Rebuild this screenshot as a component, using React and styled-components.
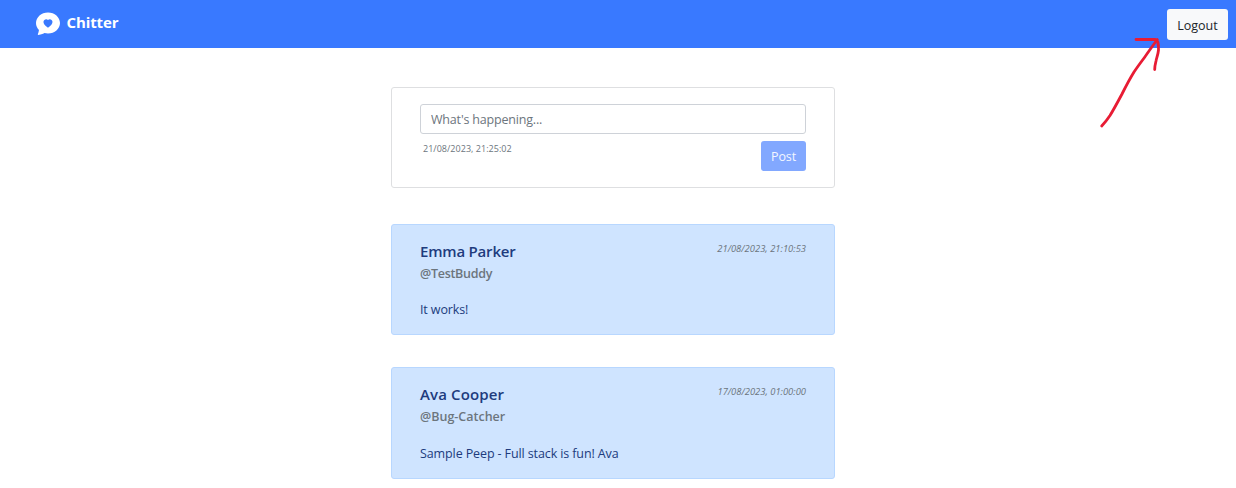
import React from "react";
import styled, { createGlobalStyle } from "styled-components";
import { BsChatHeartFill } from "react-icons/bs";

const GlobalStyle = createGlobalStyle`
  *, *::before, *::after { box-sizing: border-box; }
  body {
    margin: 0;
    background: #fff;
    color: #212529;
    font-family: "Segoe UI", "Open Sans", "Noto Sans", sans-serif;
    font-size: 12.5px;
    line-height: 18px;
    overflow: hidden;
  }
`;

const Page = styled.div`
  position: relative;
  height: 488px;
  overflow: hidden;
`;

const Navbar = styled.nav`
  display: flex;
  align-items: center;
  justify-content: space-between;
  height: 48px;
  padding: 0 8px 0 36px;
  background: #3979ff;
`;

const Brand = styled.a`
  display: flex;
  align-items: center;
  gap: 6.5px;
  color: #fff;
  font-size: 15px;
  font-weight: 700;
  line-height: 24px;
  letter-spacing: -0.1px;

  svg {
    display: block;
    margin-top: -2px;
  }
  span {
    margin-top: -4px;
  }
`;

const Button = styled.button`
  display: flex;
  align-items: center;
  justify-content: center;
  width: ${(p) => p.$width}px;
  height: ${(p) => p.$height}px;
  padding: ${(p) => (p.$primary ? 1 : 3)}px 0 0;
  border: 0;
  border-radius: 3px;
  font: inherit;
  letter-spacing: ${(p) => p.$tracking || 0}px;
  color: ${(p) => (p.$primary ? "#f3f7ff" : "#212529")};
  background: ${(p) => (p.$primary ? "#82a8ff" : "#f8f9fa")};
`;

const Feed = styled.main`
  display: flex;
  flex-direction: column;
  width: 444px;
  margin: 39px 0 0 391px;
`;

const Card = styled.section`
  height: ${(p) => p.$height}px;
  margin-bottom: ${(p) => p.$gap || 0}px;
  padding: 16px 28px;
  border: 1px solid ${(p) => (p.$tinted ? "#b8d7ff" : "#dedfe1")};
  border-radius: 3px;
  background: ${(p) => (p.$tinted ? "#cfe4ff" : "#fff")};
`;

const PostInput = styled.input`
  display: block;
  width: 100%;
  height: 30px;
  padding: 1px 9px 0 10px;
  border: 1px solid #ced2d8;
  border-radius: 3px;
  outline: 0;
  font: inherit;
  letter-spacing: -0.18px;

  &::placeholder {
    color: #6c757d;
    opacity: 1;
  }
`;

const Row = styled.div`
  display: flex;
  align-items: flex-start;
  justify-content: space-between;
  margin-top: ${(p) => p.$top || 0}px;
`;

const Stamp = styled.time`
  margin: ${(p) => p.$margin || 0};
  color: #6c757d;
  font-size: ${(p) => (p.$italic ? 9.4 : 9)}px;
  line-height: 14px;
  letter-spacing: ${(p) => p.$tracking || 0}px;
  font-style: ${(p) => (p.$italic ? "italic" : "normal")};
`;

const Author = styled.h2`
  margin: 0;
  color: #203b7d;
  font-size: 15px;
  font-weight: 600;
  line-height: 20px;
  letter-spacing: ${(p) => p.$tracking}px;
`;

const Handle = styled.h3`
  margin: 4px 0 0;
  color: #6c757d;
  font-size: 12.5px;
  font-weight: 600;
  line-height: 18px;
  letter-spacing: ${(p) => p.$tracking}px;
`;

const Message = styled.p`
  margin: ${(p) => p.$top}px 0 0;
  color: #203b7d;
  letter-spacing: ${(p) => p.$tracking}px;
`;

const Arrow = styled.svg`
  position: absolute;
  left: 1090px;
  top: 30px;
  pointer-events: none;
`;

const peeps = [
  { name: "Emma Parker", handle: "@TestBuddy", text: "It works!", date: "21/08/2023, 21:10:53", height: 111, gap: 32, top: 18, nameTracking: -0.2, handleTracking: -0.28, textTracking: -0.12, dateTracking: 0.02 },
  { name: "Ava Cooper", handle: "@Bug-Catcher", text: "Sample Peep - Full stack is fun! Ava", date: "17/08/2023, 01:00:00", height: 112, gap: 0, top: 19, nameTracking: 0.12, handleTracking: 0, textTracking: -0.11, dateTracking: 0.01 },
];

export default function App() {
  return (
    <Page>
      <GlobalStyle />
      <Navbar>
        <Brand>
          <BsChatHeartFill size={24} />
          <span>Chitter</span>
        </Brand>
        <Button $width={61} $height={31}>Logout</Button>
      </Navbar>
      <Feed>
        <Card $height={101} $gap={36}>
          <PostInput placeholder="What's happening..." />
          <Row $top={7}>
            <Stamp $margin="1px 0 0 3px" $tracking={0.03}>21/08/2023, 21:25:02</Stamp>
            <Button $primary $width={45} $height={30} $tracking={-0.1}>Post</Button>
          </Row>
        </Card>
        {peeps.map((p) => (
          <Card key={p.handle} $tinted $height={p.height} $gap={p.gap}>
            <Row>
              <Author $tracking={p.nameTracking}>{p.name}</Author>
              <Stamp $italic $margin="1px 0 0" $tracking={p.dateTracking}>{p.date}</Stamp>
            </Row>
            <Handle $tracking={p.handleTracking}>{p.handle}</Handle>
            <Message $top={p.top} $tracking={p.textTracking}>{p.text}</Message>
          </Card>
        ))}
      </Feed>
      <Arrow width="80" height="105" viewBox="0 0 80 105" fill="none" stroke="#e81c34" strokeWidth="2.8" strokeLinecap="round" strokeLinejoin="round">
        <path d="M11.700 96C15 92.500 17 90 20 85.500C24 79 28 71.500 32 64C36 56 40 48.500 44 42C48 36 51.500 31.500 55.500 26C59.500 20.500 63.500 14.500 67.300 9.500" />
        <path d="M46 9.500H65.500C68 10 68.700 16 68.500 20C68 25 66.500 28 66 31C65 35 64.700 37 64.700 39.500" />
      </Arrow>
    </Page>
  );
}
